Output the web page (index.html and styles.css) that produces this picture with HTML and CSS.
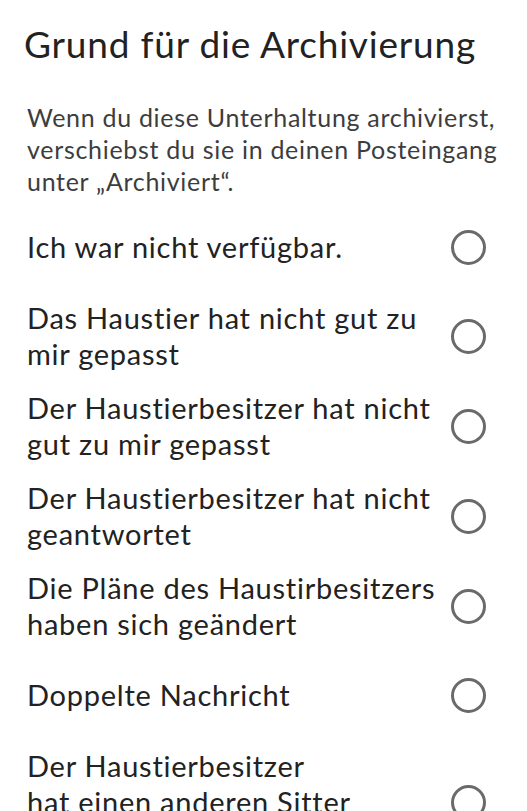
FILE: index.html
```html
<!DOCTYPE html>
<html lang="de">
<head>
  <meta charset="UTF-8">
  <title>Grund für die Archivierung</title>
  <link rel="stylesheet" href="styles.css">
</head>
<body>
<div class="sheet">
  <h1 class="title">Grund für die Archivierung</h1>
  <p class="intro">Wenn du diese Unterhaltung archivierst, verschiebst du sie in deinen Posteingang unter „Archiviert“.</p>

  <div class="reasons">
    <label class="reason">
      <span class="reasonText">Ich war nicht verfügbar.</span>
      <span class="radio"></span>
    </label>
    <label class="reason">
      <span class="reasonText">Das Haustier hat nicht gut zu mir gepasst</span>
      <span class="radio"></span>
    </label>
    <label class="reason">
      <span class="reasonText">Der Haustierbesitzer hat nicht gut zu mir gepasst</span>
      <span class="radio"></span>
    </label>
    <label class="reason">
      <span class="reasonText">Der Haustierbesitzer hat nicht geantwortet</span>
      <span class="radio"></span>
    </label>
    <label class="reason">
      <span class="reasonText">Die Pläne des Haustirbesitzers haben sich geändert</span>
      <span class="radio"></span>
    </label>
    <label class="reason">
      <span class="reasonText">Doppelte Nachricht</span>
      <span class="radio"></span>
    </label>
    <label class="reason">
      <span class="reasonText">Der Haustierbesitzer<br>hat einen anderen Sitter<br>gefunden</span>
      <span class="radio"></span>
    </label>
  </div>
</div>
</body>
</html>
```

FILE: styles.css
```css
body {
  margin: 0;
  background-color: white;
  font-family: Lato, "Open Sans", sans-serif;
  font-variant-ligatures: none;
  overflow: hidden;
}

.sheet {
  padding: 22px 18px 0 27px;
}

.title {
  margin: 0 0 0 -3px;
  font-size: 37px;
  line-height: 44px;
  font-weight: normal;
  letter-spacing: 0.8px;
  color: #222222;
}

.intro {
  margin: 35px 0 0 0;
  font-size: 25px;
  line-height: 32px;
  letter-spacing: 0.7px;
  color: #3d3d3d;
}

.reasons {
  margin-top: 6px;
  padding-right: 23px;
}

.reason {
  display: flex;
  align-items: center;
  min-height: 70px;
  padding: 9px 0;
}

.reasonText {
  flex: 1;
  font-size: 29px;
  line-height: 36px;
  letter-spacing: 0.75px;
  color: #222222;
  padding-right: 10px;
}

.radio {
  flex: none;
  width: 29px;
  height: 29px;
  border: 3.5px solid #6a6a6a;
  border-radius: 50%;
}
```
